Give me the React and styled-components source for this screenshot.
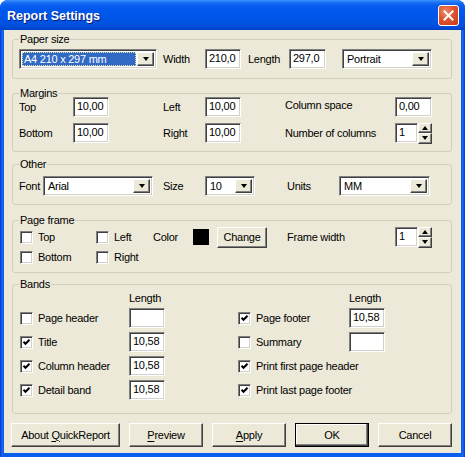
import React from 'react'
import styled, { createGlobalStyle, css } from 'styled-components'

const GlobalStyle = createGlobalStyle`
  html, body {
    margin:0;
    padding:0;
    background:#fff;
  }
  body {
    font-family:"Liberation Sans", Arial, sans-serif;
    font-size:11px;
    letter-spacing:-0.25px;
    color:#000;
  }
`

const sunken = css`
  border:1px solid;
  border-color:#808080 #fff #fff #808080;
  box-shadow:inset 1px 1px #404040, inset -1px -1px #d4d0c8;
`

const raised = css`
  border:1px solid;
  border-color:#fff #404040 #404040 #fff;
  box-shadow:inset -1px -1px #808080;
`

const Window = styled.div`
  width:465px;
  height:457px;
  display:flex;
  flex-direction:column;
  box-sizing:border-box;
  border-radius:8px 8px 0 0;
  overflow:hidden;
  background:linear-gradient(90deg, #0831d9 0, #166aee 2px, #0a5df0 4px, #0a5df0 461px, #166aee 463px, #0831d9 100%);
`

const TitleBar = styled.div`
  height:30px;
  flex:none;
  display:flex;
  align-items:center;
  justify-content:space-between;
  padding:0 6px 0 7px;
  background:linear-gradient(180deg, #3d95ff 0, #1f76f5 2px, #0a5ff0 5px, #0058ee 9px, #0055e6 18px, #0052e0 24px, #0049d4 28px, #0040c4 30px);
`

const Title = styled.div`
  color:#fff;
  font-family:"Liberation Sans", Arial, sans-serif;
  font-weight:bold;
  font-size:12.5px;
  letter-spacing:0;
  text-shadow:1px 1px #0b1d7a;
  padding-top:1px;
`

const CloseButton = styled.div`
  width:19px;
  height:19px;
  border:1px solid #fff;
  border-radius:3px;
  background:radial-gradient(circle at 35% 30%, #f08a66 0, #e0542c 45%, #c8391a 100%);
  display:flex;
  align-items:center;
  justify-content:center;
  margin-top:1px;
`

const Client = styled.div`
  flex:1;
  margin:0 4px 4px 4px;
  background:#ece9d8;
  padding:5px 9px 0 8px;
  display:flex;
  flex-direction:column;
`

const Group = styled.fieldset`
  margin:${p => p.$mt || 0}px 0 0 0;
  padding:0 6px ${p => p.$pb}px 6px;
  border:1px solid #d0d0bf;
  border-radius:3px;
  min-width:0;
`

const Caption = styled.legend`
  padding:0 1px;
  line-height:8px;
  font-size:11px;
`

const Text = styled.span`
  white-space:nowrap;
  line-height:13px;
  padding-bottom:${p => p.$pb || 0}px;
`

const PaperRow = styled.div`
  display:grid;
  grid-template-columns:144px 42px 43px 41px 53px 90px;
  align-items:center;
  height:20px;
  margin-top:6px;
`

const MarginGrid = styled.div`
  display:grid;
  grid-template-columns:54px 90px 42px 80px 110px 37px;
  grid-auto-rows:20px;
  row-gap:6px;
  align-items:center;
`

const OtherRow = styled.div`
  display:grid;
  grid-template-columns:24px 120px 42px 82px 52px 91px;
  align-items:center;
  height:20px;
  margin-top:8px;
`

const FrameGrid = styled.div`
  display:grid;
  grid-template-columns:76px 58px 40px 24px 70px 108px 37px;
  grid-template-rows:20px 20px;
  align-items:center;
  margin-top:3px;
`

const BandsGrid = styled.div`
  display:grid;
  grid-template-columns:110px 108px 112px 36px;
  grid-template-rows:12px repeat(4, 20px);
  row-gap:4px;
  align-items:center;
  margin-top:4px;
`

const Field = styled.div`
  ${sunken};
  box-sizing:border-box;
  width:${p => p.$w}px;
  height:20px;
  background:#fff;
  padding:0 3px 2px 3px;
  display:flex;
  align-items:center;
  white-space:nowrap;
`

const ComboBox = styled.div`
  ${sunken};
  box-sizing:border-box;
  width:${p => p.$w}px;
  height:20px;
  background:#fff;
  padding:2px;
  display:flex;
  align-items:stretch;
`

const ComboText = styled.div`
  flex:1;
  display:flex;
  align-items:center;
  padding:0 0 1px 2px;
  margin-right:1px;
  white-space:nowrap;
  overflow:hidden;
  ${p => p.$selected && css`
    background:#316ac5;
    color:#fff;
    outline:1px dotted #e8e8a0;
    outline-offset:-1px;
  `}
`

const DropButton = styled.div`
  ${raised};
  box-sizing:border-box;
  width:17px;
  background:#ece9d8;
  display:flex;
  align-items:center;
  justify-content:center;
`

const Arrow = styled.span`
  width:0;
  height:0;
  border-left:3.5px solid transparent;
  border-right:3.5px solid transparent;
  ${p => p.$up
    ? css`border-bottom:4px solid #000;`
    : css`border-top:4px solid #000;`}
`

const SpinBox = styled.div`
  display:flex;
  align-items:stretch;
  height:21px;
`

const SpinButtons = styled.div`
  display:flex;
  flex-direction:column;
  width:14px;
`

const SpinButton = styled.div`
  ${raised};
  flex:1;
  box-sizing:border-box;
  background:#ece9d8;
  display:flex;
  align-items:center;
  justify-content:center;
`

const CheckRow = styled.label`
  display:flex;
  align-items:center;
  gap:5px;
  padding-left:1px;
`

const Box = styled.span`
  ${sunken};
  box-sizing:border-box;
  width:13px;
  height:13px;
  background:#fff;
  display:flex;
  align-items:center;
  justify-content:center;
  flex:none;
`

const Swatch = styled.div`
  width:16px;
  height:16px;
  background:${p => p.$color};
`

const PushButton = styled.div`
  ${raised};
  box-sizing:border-box;
  width:${p => p.$w}px;
  height:${p => p.$h || 24}px;
  background:#ece9d8;
  display:flex;
  align-items:center;
  justify-content:center;
  white-space:nowrap;
  padding-bottom:1px;
  ${p => p.$default && css`
    outline:1px solid #000;
    outline-offset:-1px;
    border-color:#fff #404040 #404040 #fff;
    box-shadow:inset -1px -1px #404040, inset -2px -2px #808080, inset 1px 1px #fff;
  `}
`

const ButtonRow = styled.div`
  display:flex;
  gap:9px;
  margin:9px 0 0 -1px;
`

const Key = styled.u`
  text-decoration-thickness:1px;
  text-underline-offset:2px;
`

const Combo = ({ w, value, selected }) => (
  <ComboBox $w={w}>
    <ComboText $selected={selected}>{value}</ComboText>
    <DropButton><Arrow /></DropButton>
  </ComboBox>
)

const Spin = ({ value }) => (
  <SpinBox>
    <Field $w={23}>{value}</Field>
    <SpinButtons>
      <SpinButton><Arrow $up /></SpinButton>
      <SpinButton><Arrow /></SpinButton>
    </SpinButtons>
  </SpinBox>
)

const CheckBox = ({ checked, label }) => (
  <CheckRow>
    <Box>
      {checked && (
        <svg width="9" height="9" viewBox="0 0 9 9">
          <polyline points="1.5,3.8 3.5,5.8 7.5,1.8" fill="none" stroke="#000" strokeWidth="2" />
        </svg>
      )}
    </Box>
    <Text>{label}</Text>
  </CheckRow>
)

const App = () => {
  return (
    <Window>
      <GlobalStyle />
      <TitleBar>
        <Title>Report Settings</Title>
        <CloseButton>
          <svg width="11" height="11" viewBox="0 0 11 11">
            <path d="M1.5 1.5 L9.5 9.5 M9.5 1.5 L1.5 9.5" stroke="#fff" strokeWidth="2" strokeLinecap="square" />
          </svg>
        </CloseButton>
      </TitleBar>
      <Client>
        <Group $pb={9}>
          <Caption>Paper size</Caption>
          <PaperRow>
            <Combo w={138} value="A4 210 x 297 mm" selected />
            <Text>Width</Text>
            <Field $w={36}>210,0</Field>
            <Text>Length</Text>
            <Field $w={37}>297,0</Field>
            <Combo w={90} value="Portrait" />
          </PaperRow>
        </Group>

        <Group $mt={10} $pb={8}>
          <Caption>Margins</Caption>
          <MarginGrid>
            <Text>Top</Text>
            <Field $w={36}>10,00</Field>
            <Text>Left</Text>
            <Field $w={36}>10,00</Field>
            <Text $pb={3}>Column space</Text>
            <Field $w={37}>0,00</Field>
            <Text>Bottom</Text>
            <Field $w={36}>10,00</Field>
            <Text>Right</Text>
            <Field $w={36}>10,00</Field>
            <Text>Number of columns</Text>
            <Spin value="1" />
          </MarginGrid>
        </Group>

        <Group $mt={8} $pb={8}>
          <Caption>Other</Caption>
          <OtherRow>
            <Text>Font</Text>
            <Combo w={110} value="Arial" />
            <Text>Size</Text>
            <Combo w={50} value="10" />
            <Text>Units</Text>
            <Combo w={91} value="MM" />
          </OtherRow>
        </Group>

        <Group $mt={11} $pb={5}>
          <Caption>Page frame</Caption>
          <FrameGrid>
            <CheckBox label="Top" />
            <CheckBox label="Left" />
            <Text>Color</Text>
            <Swatch $color="#000" />
            <PushButton $w={50} $h={21}>Change</PushButton>
            <Text>Frame width</Text>
            <Spin value="1" />
            <CheckBox label="Bottom" />
            <CheckBox label="Right" />
          </FrameGrid>
        </Group>

        <Group $mt={7} $pb={13}>
          <Caption>Bands</Caption>
          <BandsGrid>
            <span />
            <Text>Length</Text>
            <span />
            <Text>Length</Text>

            <CheckBox label="Page header" />
            <Field $w={36} />
            <CheckBox checked label="Page footer" />
            <Field $w={36}>10,58</Field>

            <CheckBox checked label="Title" />
            <Field $w={36}>10,58</Field>
            <CheckBox label="Summary" />
            <Field $w={36} />

            <CheckBox checked label="Column header" />
            <Field $w={36}>10,58</Field>
            <CheckBox checked label="Print first page header" />
            <span />

            <CheckBox checked label="Detail band" />
            <Field $w={36}>10,58</Field>
            <CheckBox checked label="Print last page footer" />
            <span />
          </BandsGrid>
        </Group>

        <ButtonRow>
          <PushButton $w={109}>About&nbsp;<Key>Q</Key>uickReport</PushButton>
          <PushButton $w={74}><Key>P</Key>review</PushButton>
          <PushButton $w={74}><Key>A</Key>pply</PushButton>
          <PushButton $w={74} $default>OK</PushButton>
          <PushButton $w={74}>Cancel</PushButton>
        </ButtonRow>
      </Client>
    </Window>
  )
}

export default App
